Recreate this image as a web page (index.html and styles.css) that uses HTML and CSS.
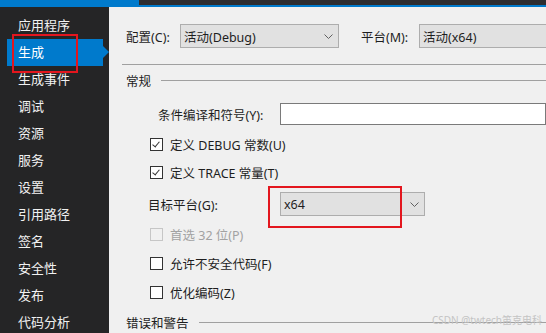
FILE: index.html
```html
<!DOCTYPE html>
<html lang="zh-CN">
<head>
    <meta charset="UTF-8">
    <title>项目属性 - 生成</title>
    <link rel="stylesheet" href="styles.css">
</head>
<body>
    <div class="topbar"><div class="topbar-dark"></div></div>
    <div class="main">
        <div class="sidebar">
            <div class="nav-item">应用程序</div>
            <div class="nav-item active">生成<span class="mark-nav"></span></div>
            <div class="nav-item">生成事件</div>
            <div class="nav-item">调试</div>
            <div class="nav-item">资源</div>
            <div class="nav-item">服务</div>
            <div class="nav-item">设置</div>
            <div class="nav-item">引用路径</div>
            <div class="nav-item">签名</div>
            <div class="nav-item">安全性</div>
            <div class="nav-item">发布</div>
            <div class="nav-item">代码分析</div>
        </div>

        <div class="content">
            <div class="config-row">
                <span class="label label-config">配置(C):</span>
                <div class="select select-config">
                    <span>活动(Debug)</span>
                    <svg class="chevron" width="9" height="5" viewBox="0 0 9 5"><path d="M0.5 0.5 L4.5 4.5 L8.5 0.5" fill="none" stroke="#606060" stroke-width="1"/></svg>
                </div>
                <span class="label label-platform">平台(M):</span>
                <div class="select select-platform">
                    <span>活动(x64)</span>
                </div>
            </div>

            <div class="divider"></div>

            <div class="section">
                <span>常规</span>
                <div class="section-line"></div>
            </div>

            <div class="row row-symbols">
                <span class="label label-symbols">条件编译和符号(Y):</span>
                <div class="textbox"></div>
            </div>

            <div class="check-row first">
                <span class="checkbox checked"></span>
                <span>定义 DEBUG 常数(U)</span>
            </div>
            <div class="check-row">
                <span class="checkbox checked"></span>
                <span>定义 TRACE 常量(T)</span>
            </div>

            <div class="row row-target">
                <span class="label label-target">目标平台(G):</span>
                <div class="select select-target">
                    <span>x64</span>
                    <svg class="chevron" width="9" height="5" viewBox="0 0 9 5"><path d="M0.5 0.5 L4.5 4.5 L8.5 0.5" fill="none" stroke="#606060" stroke-width="1"/></svg>
                    <span class="mark-target"></span>
                </div>
            </div>

            <div class="check-row tall first-tall disabled">
                <span class="checkbox"></span>
                <span>首选 32 位(P)</span>
            </div>
            <div class="check-row tall">
                <span class="checkbox"></span>
                <span>允许不安全代码(F)</span>
            </div>
            <div class="check-row tall">
                <span class="checkbox"></span>
                <span>优化编码(Z)</span>
            </div>

            <div class="section section-errors">
                <span>错误和警告</span>
                <div class="section-line"></div>
            </div>

            <div class="watermark">CSDN @twtech笛克电科</div>
        </div>
    </div>
</body>
</html>
```

FILE: styles.css
```css
body {
    margin: 0;
    width: 546px;
    height: 333px;
    overflow: hidden;
    font-family: "Noto Sans", "Noto Sans CJK SC", sans-serif;
    font-size: 12.5px;
    color: #1e1e1e;
    background-color: #f0f0f0;
}
.topbar {
    height: 7px;
    background-color: #007acc;
    display: flex;
    justify-content: flex-end;
}
.topbar-dark {
    width: 407px;
    height: 5px;
    background-color: #2d2d30;
}
.main {
    display: flex;
    height: 326px;
}
.sidebar {
    width: 109px;
    flex-shrink: 0;
    background-color: #252526;
    padding-top: 5px;
    font-size: 13px;
}
.nav-item {
    position: relative;
    height: 27px;
    line-height: 27px;
    margin-left: 7px;
    width: 96px;
    padding-left: 11px;
    box-sizing: border-box;
    color: #f1f1f1;
}
.nav-item.active {
    background-color: #007acc;
    color: #ffffff;
}
.nav-item.active::after {
    content: "";
    position: absolute;
    right: -6px;
    top: 7px;
    border-left: 6px solid #007acc;
    border-top: 6px solid transparent;
    border-bottom: 6px solid transparent;
}
.mark-nav {
    position: absolute;
    left: 5px;
    top: -5px;
    width: 66px;
    height: 39px;
    border: 2px solid #e3161e;
    box-sizing: border-box;
}
.content {
    flex: 1;
    min-width: 0;
    position: relative;
    padding-left: 15px;
}
.label {
    white-space: nowrap;
    flex-shrink: 0;
}
.config-row {
    display: flex;
    align-items: center;
    margin-top: 17px;
    height: 24px;
    padding-left: 2px;
}
.label-config {
    width: 54px;
}
.select {
    position: relative;
    display: flex;
    align-items: center;
    flex-shrink: 0;
    white-space: nowrap;
    height: 24px;
    box-sizing: border-box;
    border: 1px solid #adadad;
    background-color: #e1e1e1;
    padding-left: 3px;
}
.chevron {
    position: absolute;
    right: 5px;
    top: 9px;
}
.select-config {
    width: 159px;
}
.label-platform {
    width: 58px;
    margin-left: 22px;
}
.select-platform {
    width: 140px;
}
.divider {
    margin-top: 16px;
    margin-left: -2px;
    height: 1px;
    background-color: #a0a0a0;
}
.section {
    display: flex;
    align-items: center;
    height: 20px;
    margin-top: 5px;
    padding-left: 2px;
}
.section-line {
    flex: 1;
    height: 1px;
    background-color: #a0a0a0;
    margin-left: 10px;
}
.row {
    display: flex;
    align-items: center;
}
.row-symbols {
    margin-top: 13px;
    height: 22px;
    padding-left: 34px;
}
.label-symbols {
    width: 122px;
}
.textbox {
    flex: 1;
    height: 22px;
    box-sizing: border-box;
    border: 1px solid #7a7a7a;
    background-color: #ffffff;
}
.check-row {
    display: flex;
    align-items: center;
    height: 28px;
    padding-left: 26px;
    white-space: nowrap;
}
.check-row.first {
    margin-top: 5px;
}
.check-row.tall {
    height: 29px;
}
.check-row.first-tall {
    margin-top: 4px;
}
.checkbox {
    position: relative;
    flex-shrink: 0;
    width: 13px;
    height: 13px;
    box-sizing: border-box;
    border: 1px solid #333333;
    background-color: #ffffff;
    margin-right: 7px;
}
.checkbox.checked::after {
    content: "";
    position: absolute;
    left: 3px;
    top: 1px;
    width: 3px;
    height: 6px;
    border-right: 1px solid #333333;
    border-bottom: 1px solid #333333;
    transform: rotate(40deg);
}
.disabled {
    color: #a2a2a2;
}
.disabled .checkbox {
    border-color: #c6c6c6;
    background-color: #f0f0f0;
}
.row-target {
    margin-top: 6px;
    height: 24px;
    padding-left: 24px;
}
.label-target {
    width: 132px;
}
.select-target {
    width: 145px;
}
.mark-target {
    position: absolute;
    left: -13px;
    top: -7px;
    width: 134px;
    height: 42px;
    border: 2px solid #e3161e;
    box-sizing: border-box;
}
.section-errors {
    margin-top: 5px;
}
.watermark {
    position: absolute;
    right: 4px;
    bottom: 6px;
    font-size: 10px;
    color: #c4c4c4;
}
```
